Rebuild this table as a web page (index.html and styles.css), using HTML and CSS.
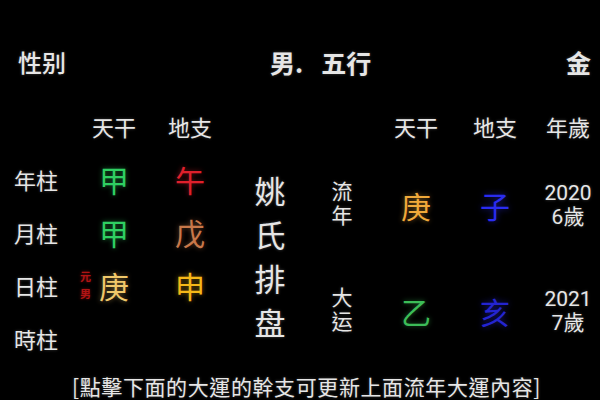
FILE: index.html
```html
<!DOCTYPE html>
<html lang="zh-Hant">
<head>
<meta charset="utf-8">
<link rel="stylesheet" href="styles.css">
</head>
<body>
<div class="page">
  <div class="summary">
    <span class="sum-label">性别</span>
    <span class="sum-mid">男.<span class="sum-gap">五行</span></span>
    <span class="sum-val">金</span>
  </div>
  <div class="chart">
    <div class="hd c2">天干</div>
    <div class="hd c3">地支</div>
    <div class="hd c6">天干</div>
    <div class="hd c7">地支</div>
    <div class="hd c8">年歲</div>

    <div class="lbl r1">年柱</div>
    <div class="gz c2 r1 green">甲</div>
    <div class="gz c3 r1 red">午</div>

    <div class="lbl r2">月柱</div>
    <div class="gz c2 r2 green">甲</div>
    <div class="gz c3 r2 brown">戊</div>

    <div class="lbl r3">日柱</div>
    <div class="gz c2 r3 pale"><span class="yuan">元<br>男</span>庚</div>
    <div class="gz c3 r3 gold">申</div>

    <div class="lbl r4">時柱</div>

    <div class="name">
      <span>姚</span><span>氏</span><span>排</span><span>盘</span>
    </div>

    <div class="side top">流年</div>
    <div class="gz c6 top orange">庚</div>
    <div class="gz c7 top blue">子</div>
    <div class="age top">2020<br>6歲</div>

    <div class="side bot">大运</div>
    <div class="gz c6 bot green2">乙</div>
    <div class="gz c7 bot blue2">亥</div>
    <div class="age bot">2021<br>7歲</div>
  </div>
  <div class="note">[點擊下面的大運的幹支可更新上面流年大運內容]</div>
</div>
</body>
</html>
```

FILE: styles.css
```css
html, body {
  margin: 0;
  padding: 0;
  background: #000;
}

body {
  width: 600px;
  height: 400px;
  overflow: hidden;
  font-family: "Noto Sans CJK TC", "Noto Sans CJK SC", "Noto Sans", sans-serif;
  color: #e6e6e6;
}

.page {
  display: flex;
  flex-direction: column;
}

.summary {
  display: grid;
  grid-template-columns: 252px 1fr auto;
  align-items: center;
  margin-top: 48px;
  height: 28px;
  padding: 0 9px 0 18px;
  font-size: 24px;
  font-weight: 500;
  line-height: 28px;
  text-shadow: 0 0 3px rgba(255, 255, 255, 0.25);
}

.sum-mid {
  font-weight: 700;
  font-size: 25px;
}

.sum-gap {
  margin-left: 18px;
}

.sum-val {
  font-weight: 700;
  font-size: 25px;
}

.chart {
  display: grid;
  grid-template-columns: 76px 76px 76px 84px 60px 88px 70px 70px;
  grid-template-rows: 52px repeat(4, 53px);
  margin-top: 24px;
  align-items: center;
  justify-items: center;
}

.hd {
  grid-row: 1;
  font-size: 22px;
  line-height: 26px;
  text-shadow: 0 0 3px rgba(255, 255, 255, 0.25);
}

.c2 { grid-column: 2; }
.c3 { grid-column: 3; }
.c6 { grid-column: 6; }
.c7 { grid-column: 7; }
.c8 { grid-column: 8; padding-left: 6px; }

.r1 { grid-row: 2; }
.r2 { grid-row: 3; }
.r3 { grid-row: 4; }
.r4 { grid-row: 5; }
.top { grid-row: 2 / span 2; }
.bot { grid-row: 4 / span 2; }

.lbl {
  grid-column: 1;
  justify-self: start;
  padding-left: 14px;
  font-size: 22px;
  line-height: 26px;
  text-shadow: 0 0 3px rgba(255, 255, 255, 0.25);
}

.gz {
  position: relative;
  font-size: 30px;
  line-height: 34px;
}

.green { color: #2fcf62; text-shadow: 0 0 5px rgba(47, 207, 98, 0.5); }
.red { color: #e0202c; text-shadow: 0 0 5px rgba(224, 32, 44, 0.5); }
.brown { color: #c8784a; text-shadow: 0 0 5px rgba(200, 120, 74, 0.5); }
.pale { color: #f0c86a; text-shadow: 0 0 5px rgba(240, 200, 106, 0.5); }
.gold { color: #f5b818; text-shadow: 0 0 5px rgba(245, 184, 24, 0.5); }
.orange { color: #f0a93a; text-shadow: 0 0 5px rgba(240, 169, 58, 0.5); }
.blue { color: #2a2cf0; text-shadow: 0 0 6px rgba(42, 44, 240, 0.6); }
.green2 { color: #3cbc58; text-shadow: 0 0 5px rgba(60, 188, 88, 0.5); }
.blue2 { color: #2424d0; text-shadow: 0 0 6px rgba(36, 36, 208, 0.6); }

.yuan {
  position: absolute;
  right: 100%;
  top: 0;
  margin-right: 8px;
  font-size: 11px;
  line-height: 17px;
  font-weight: 700;
  color: #b01414;
  text-shadow: 0 0 3px rgba(200, 20, 20, 0.6);
}

.name {
  grid-column: 4;
  grid-row: 2 / span 4;
  display: flex;
  flex-direction: column;
  align-items: center;
  font-size: 31px;
  line-height: 44px;
  margin-top: -4px;
  text-shadow: 0 0 3px rgba(255, 255, 255, 0.3);
}

.side {
  grid-column: 5;
  writing-mode: vertical-rl;
  text-orientation: upright;
  font-size: 21px;
  line-height: 24px;
  letter-spacing: 3px;
  text-shadow: 0 0 3px rgba(255, 255, 255, 0.25);
}

.age {
  grid-column: 8;
  padding-left: 6px;
  text-align: center;
  font-family: "Roboto", "Noto Sans CJK TC", sans-serif;
  font-size: 21px;
  line-height: 24px;
  text-shadow: 0 0 3px rgba(255, 255, 255, 0.25);
}

.note {
  margin-top: 11px;
  padding-left: 72px;
  font-size: 21px;
  line-height: 23px;
  letter-spacing: 0.6px;
  white-space: nowrap;
  text-shadow: 0 0 3px rgba(255, 255, 255, 0.25);
}
```
